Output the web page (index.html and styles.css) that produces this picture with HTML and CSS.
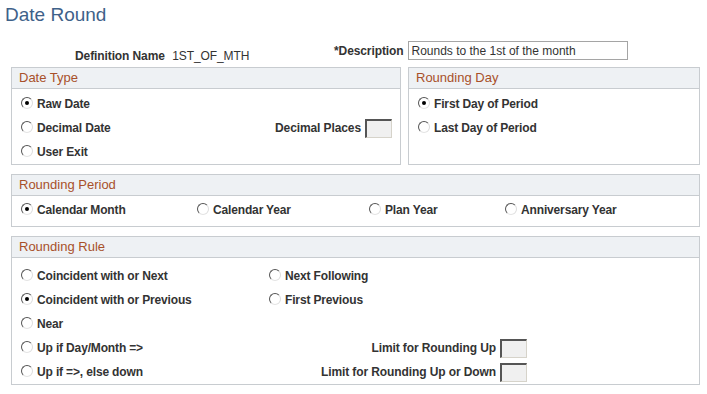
FILE: index.html
```html
<!DOCTYPE html>
<html>
<head>
    <title>Date Round</title>
    <link rel="stylesheet" href="styles.css">
</head>
<body>
    <h1 class="page-title">Date Round</h1>

    <div class="page">
        <div class="key-row">
            <div class="def-name">
                <span class="label">Definition Name</span>
                <span class="value">1ST_OF_MTH</span>
            </div>
            <div class="descr">
                <span class="label">*Description</span>
                <input type="text" class="text-field" value="Rounds to the 1st of the month">
            </div>
        </div>

        <div class="top-boxes">
            <div class="group">
                <div class="group-head">Date Type</div>
                <div class="group-body date-type">
                    <div class="row"><span class="radio checked"></span>Raw Date</div>
                    <div class="row split">
                        <span><span class="radio"></span>Decimal Date</span>
                        <span class="field"><span class="label">Decimal Places</span><span class="small-box"></span></span>
                    </div>
                    <div class="row"><span class="radio"></span>User Exit</div>
                </div>
            </div>
            <div class="group">
                <div class="group-head">Rounding Day</div>
                <div class="group-body date-type">
                    <div class="row"><span class="radio checked"></span>First Day of Period</div>
                    <div class="row"><span class="radio"></span>Last Day of Period</div>
                </div>
            </div>
        </div>

        <div class="group">
            <div class="group-head">Rounding Period</div>
            <div class="group-body period">
                <div class="row"><span class="radio checked"></span>Calendar Month</div>
                <div class="row"><span class="radio"></span>Calendar Year</div>
                <div class="row"><span class="radio"></span>Plan Year</div>
                <div class="row"><span class="radio"></span>Anniversary Year</div>
            </div>
        </div>

        <div class="group">
            <div class="group-head">Rounding Rule</div>
            <div class="group-body rule">
                <div class="row"><span class="radio"></span>Coincident with or Next</div>
                <div class="row"><span class="radio"></span>Next Following</div>
                <div class="row"><span class="radio checked"></span>Coincident with or Previous</div>
                <div class="row"><span class="radio"></span>First Previous</div>
                <div class="row"><span class="radio"></span>Near</div>
                <div class="row"></div>
                <div class="row"><span class="radio"></span>Up if Day/Month =&gt;</div>
                <div class="row limit"><span class="label">Limit for Rounding Up</span><span class="small-box"></span></div>
                <div class="row"><span class="radio"></span>Up if =&gt;, else down</div>
                <div class="row limit"><span class="label">Limit for Rounding Up or Down</span><span class="small-box"></span></div>
            </div>
        </div>
    </div>
</body>
</html>
```

FILE: styles.css
```css
body {
    margin: 0;
    font-family: Arial, "Liberation Sans", sans-serif;
    font-size: 12px;
    color: #333;
    background: #fff;
}
.page-title {
    margin: 0;
    padding: 4px 0 0 5px;
    font-size: 19px;
    font-weight: normal;
    line-height: 22px;
    color: #3e6189;
}
.page {
    width: 689px;
    margin-left: 11px;
    padding-top: 15px;
}
.label {
    font-weight: bold;
    color: #333;
    letter-spacing: -0.1px;
}
.key-row {
    display: flex;
    height: 26px;
}
.def-name {
    width: 323px;
    padding-left: 64px;
    padding-top: 8px;
    box-sizing: border-box;
}
.def-name .value {
    margin-left: 4px;
    letter-spacing: -0.1px;
}
.descr {
    display: flex;
    align-items: center;
    height: 19px;
}
.text-field {
    width: 220px;
    height: 19px;
    box-sizing: border-box;
    margin: 0 0 0 5px;
    padding: 0 2px;
    border: 1px solid #a5a5a5;
    font-family: Arial, "Liberation Sans", sans-serif;
    font-size: 12px;
    color: #333;
}
.top-boxes {
    display: grid;
    grid-template-columns: 390px 292px;
    gap: 7px;
}
.group {
    border: 1px solid #c8ccd0;
    margin-bottom: 9px;
}
.group-head {
    height: 20px;
    line-height: 20px;
    padding-left: 7px;
    background: #eef1f4;
    border-bottom: 1px solid #c8ccd0;
    color: #a8502a;
    font-size: 13px;
}
.group-body {
    padding: 2px 8px 0 9px;
}
.date-type {
    padding-top: 3px;
    padding-bottom: 0;
}
.row {
    display: flex;
    align-items: center;
    height: 24px;
    font-weight: bold;
    white-space: nowrap;
    letter-spacing: -0.15px;
}
.radio {
    display: inline-block;
    flex: none;
    width: 10px;
    height: 10px;
    margin: -3px 4px 0 0;
    border: 1px solid;
    border-color: #555 #ddd #e4e4e4 #555;
    border-radius: 50%;
    background: #fff;
    position: relative;
}
.radio.checked::after {
    content: "";
    position: absolute;
    left: 3px;
    top: 3px;
    width: 4px;
    height: 4px;
    border-radius: 50%;
    background: #000;
}
.split {
    justify-content: space-between;
}
.split > span {
    display: flex;
    align-items: center;
}
.small-box {
    display: inline-block;
    width: 27px;
    height: 19px;
    box-sizing: border-box;
    margin-left: 4px;
    background: #f0f0f0;
    border: 1px solid;
    border-width: 2px 1px 1px 2px;
    border-color: #555 #d6d3ca #d6d3ca #555;
}
.period {
    display: grid;
    grid-template-columns: 176px 172px 136px 1fr;
    padding-top: 2px;
    padding-bottom: 4px;
}
.rule {
    display: grid;
    grid-template-columns: 248px 258px;
    padding-top: 6px;
}
.limit {
    justify-content: flex-end;
}
```
